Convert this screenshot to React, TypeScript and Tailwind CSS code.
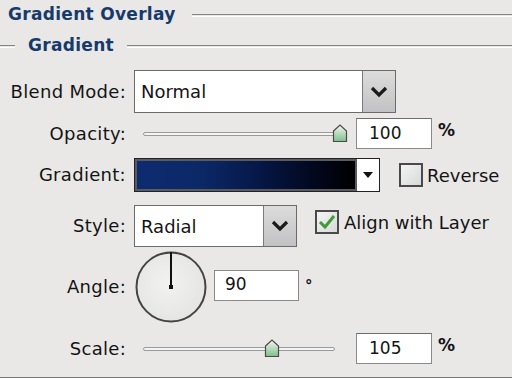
import React from 'react';

const font = { fontFamily: '"DejaVu Sans", Verdana, sans-serif' };

const Chevron = () => (
    <svg width="18" height="12" viewBox="0 0 18 12">
        <path d="M2 2 L9 9 L16 2" fill="none" stroke="#1a1a1a" strokeWidth="3.2" strokeLinejoin="miter" />
    </svg>
);

const Thumb = () => (
    <svg width="16" height="19" viewBox="0 0 16 19">
        <defs>
            <linearGradient id="thumbFill" x1="0" y1="0" x2="0" y2="1">
                <stop offset="0" stopColor="#f4f7f2" />
                <stop offset="1" stopColor="#7fbf8a" />
            </linearGradient>
        </defs>
        <path d="M1.5 7 L8 1 L14.5 7 L14.5 17.5 L1.5 17.5 Z" fill="url(#thumbFill)" stroke="#4a4a4a" strokeWidth="1.2" />
    </svg>
);

const Label = ({ children }: { children: React.ReactNode }) => (
    <div className="w-[127px] shrink-0 text-right pr-[1px] text-[18px] tracking-[0.3px] text-[#141414] leading-none">{children}</div>
);

const Slider = ({ pos, width }: { pos: number; width: number }) => (
    <div className="relative h-[20px] ml-[16px]" style={{ width }}>
        <div className="absolute left-0 right-0 top-[8px] h-[4px] rounded-full border border-[#9a9a9a] bg-[#f4f4f4]" />
        <div className="absolute top-0" style={{ left: pos }}>
            <Thumb />
        </div>
    </div>
);

const Field = ({ value, w }: { value: string; w: string }) => (
    <div className={`${w} h-[31px] bg-white border border-[#8a8a8a] border-t-[#6d6d6d] flex items-center pl-[12px] text-[17px] text-[#141414]`}>
        {value}
    </div>
);

const Dropdown = ({ value, w }: { value: string; w: string }) => (
    <div className={`${w} flex h-full border border-[#6b6b6b] bg-white`}>
        <div className="flex-1 flex items-center pl-[6px] text-[18px] text-[#141414]">{value}</div>
        <div className="w-[33px] border-l border-[#7a7a7a] bg-gradient-to-b from-[#dcdcdc] to-[#c2c2c4] flex items-center justify-center">
            <Chevron />
        </div>
    </div>
);

const Check = ({ checked }: { checked?: boolean }) => (
    <div className="w-[24px] h-[24px] border-2 border-[#4a4a4a] bg-gradient-to-br from-[#f4f4f4] to-[#d6dad8] flex items-center justify-center">
        {checked && (
            <svg width="18" height="16" viewBox="0 0 18 16">
                <path d="M2 8 L7 13 L16 2" fill="none" stroke="#3f9a3a" strokeWidth="3" />
            </svg>
        )}
    </div>
);

export default function App() {
    return (
        <div className="w-[512px] h-[378px] overflow-hidden bg-[#e9e8e7] flex flex-col border-b border-[#777]" style={font}>
            {/* Section headers */}
            <div className="h-[30px] flex items-center">
                <span className="pl-[8px] text-[17px] font-bold text-[#173a6b] tracking-[0.3px]">Gradient Overlay</span>
                <div className="flex-1 ml-[16px] h-[3px] border-t border-[#858585] border-b border-b-white" />
            </div>
            <div className="h-[32px] flex items-center">
                <div className="w-[15px] h-[3px] border-t border-[#858585] border-b border-b-white" />
                <span className="pl-[13px] text-[17px] font-bold text-[#173a6b] tracking-[0.3px]">Gradient</span>
                <div className="flex-1 ml-[13px] h-[3px] border-t border-[#858585] border-b border-b-white" />
            </div>

            {/* Blend Mode */}
            <div className="mt-[8px] h-[43px] flex items-center">
                <Label>Blend Mode:</Label>
                <div className="ml-[7px] h-full">
                    <Dropdown value="Normal" w="w-[262px]" />
                </div>
            </div>

            {/* Opacity */}
            <div className="mt-[5px] h-[31px] flex items-center">
                <Label>Opacity:</Label>
                <Slider pos={189} width={197} />
                <div className="ml-[16px]"><Field value="100" w="w-[76px]" /></div>
                <span className="ml-[6px] text-[17px] font-bold text-[#141414] -mt-[6px]">%</span>
            </div>

            {/* Gradient */}
            <div className="mt-[9px] h-[34px] flex items-center">
                <Label>Gradient:</Label>
                <div className="ml-[7px] h-full flex border border-[#222] bg-white">
                    <div className="w-[222px] h-full border-[2px] border-[#5a5a62] bg-[linear-gradient(90deg,#0d2c70_0%,#0b2866_30%,#061848_55%,#020820_80%,#000000_100%)]" />
                    <div className="w-[22px] flex items-center justify-center">
                        <svg width="10" height="6" viewBox="0 0 10 6"><path d="M0 0 H10 L5 6 Z" fill="#111" /></svg>
                    </div>
                </div>
                <div className="ml-[19px]"><Check /></div>
                <span className="ml-[4px] text-[18px] text-[#141414]">Reverse</span>
            </div>

            {/* Style */}
            <div className="mt-[13px] h-[42px] flex items-center">
                <Label>Style:</Label>
                <div className="ml-[7px] h-full">
                    <Dropdown value="Radial" w="w-[163px]" />
                </div>
                <div className="ml-[18px] -mt-[8px]"><Check checked /></div>
                <span className="ml-[5px] -mt-[8px] text-[18px] text-[#141414]">Align with Layer</span>
            </div>

            {/* Angle */}
            <div className="mt-[5px] h-[70px] flex items-center">
                <Label>Angle:</Label>
                <div className="ml-[8px]">
                    <svg width="72" height="72" viewBox="0 0 72 72">
                        <defs>
                            <radialGradient id="dial" cx="0.45" cy="0.45" r="0.6">
                                <stop offset="0" stopColor="#f2f2f0" />
                                <stop offset="1" stopColor="#e4e4e2" />
                            </radialGradient>
                        </defs>
                        <circle cx="36" cy="36" r="34.5" fill="url(#dial)" stroke="#444" strokeWidth="2" />
                        <line x1="36" y1="1" x2="36" y2="36" stroke="#111" strokeWidth="2" />
                        <rect x="34" y="34" width="4" height="4" fill="#111" />
                    </svg>
                </div>
                <div className="ml-[7px] -mt-[4px] w-[85px] h-[31px] bg-white border border-[#8a8a8a] flex items-center pl-[10px] text-[17px] text-[#141414]">90</div>
                <span className="ml-[6px] -mt-[2px] text-[15px] font-bold text-[#141414]">°</span>
            </div>

            {/* Scale */}
            <div className="mt-[11px] h-[31px] flex items-center">
                <Label>Scale:</Label>
                <Slider pos={121} width={192} />
                <div className="ml-[21px]"><Field value="105" w="w-[76px]" /></div>
                <span className="ml-[6px] text-[17px] font-bold text-[#141414] -mt-[6px]">%</span>
            </div>
        </div>
    );
}
